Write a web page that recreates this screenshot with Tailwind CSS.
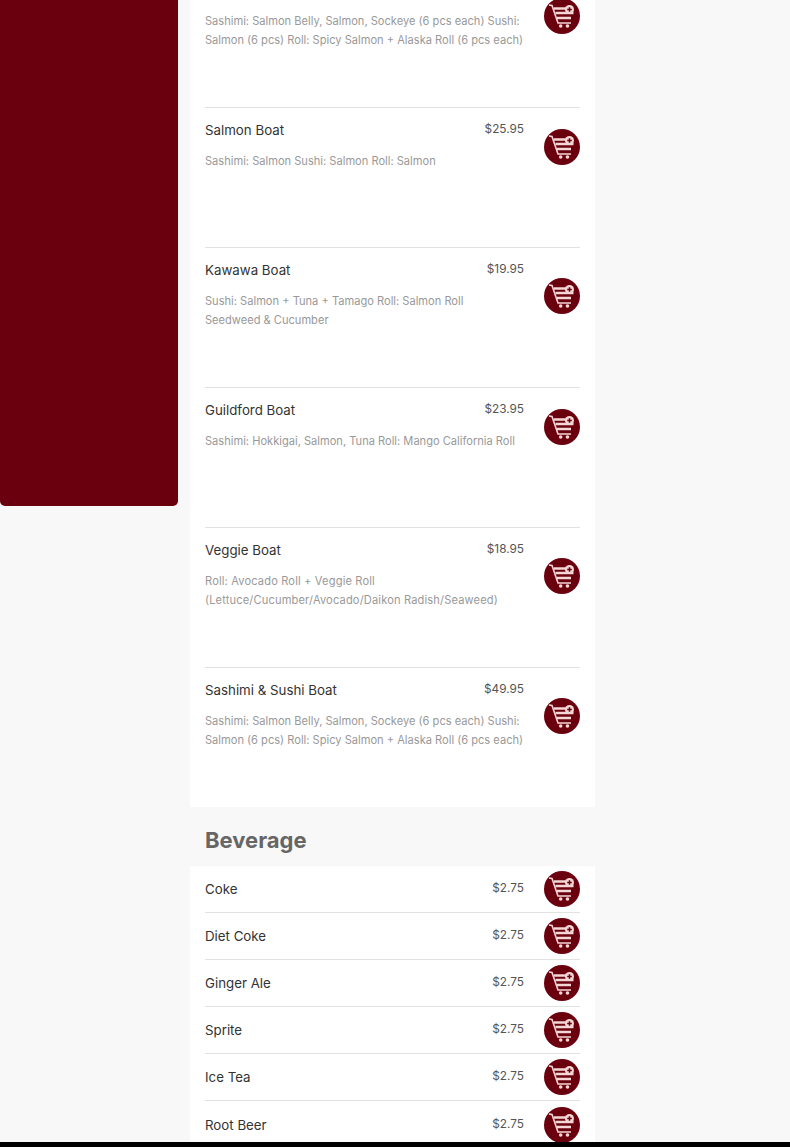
<!DOCTYPE html>
<html lang="en">

<head>
    <meta charset="UTF-8">
    <meta name="viewport" content="width=device-width, initial-scale=1.0">
    <title>Menu</title>
    <script src="https://cdn.jsdelivr.net/npm/@tailwindcss/browser@4"></script>
</head>

<body class="bg-[#f8f8f8] font-['Inter',sans-serif]">
    <div class="relative h-[1147px] overflow-hidden flex items-start">
        <div class="w-[178px] h-[506px] bg-[#6a000d] rounded-b-[5px] shrink-0"></div>

        <div class="ml-[12px] w-[405px] mt-[-33px]">
            <div class="bg-white px-[15px]">
                <div class="h-[140px] pt-[13px] flex items-start">
                    <div class="flex items-center gap-[20px] w-full">
                        <div class="w-[319px] pb-[2px]">
                            <div class="flex justify-between h-[21px] items-center text-[13.3px] text-[#333]"><span>Sashimi &amp; Sushi Boat</span><span class="pb-[2px] text-[11.8px] text-[#555]">$49.95</span></div>
                            <p class="mt-[11px] text-[11.1px] leading-[19px] text-[#999]">Sashimi: Salmon Belly, Salmon, Sockeye (6 pcs each) Sushi: Salmon (6 pcs) Roll: Spicy Salmon + Alaska Roll (6 pcs each)</p>
                        </div>
                        <button class="w-[36px] h-[36px] shrink-0"><svg viewBox="0 0 36 36" class="w-[36px] h-[36px]"><circle cx="18" cy="18" r="18" fill="#6a000d"/><path d="M5 7l3 .5 6 17.500h13" fill="none" stroke="#f3d6d6" stroke-width="1.600"/><path d="M10 10.500h12M11.500 15h18M13 20h14" fill="none" stroke="#f3d6d6" stroke-width="2.400"/><circle cx="16.700" cy="28" r="1.800" fill="#f3d6d6"/><circle cx="23.500" cy="28" r="1.800" fill="#f3d6d6"/><circle cx="25.500" cy="11.500" r="4.500" fill="#f3d6d6"/><path d="M25.500 9.200v4.600M23.200 11.500h4.600" stroke="#6a000d" stroke-width="1.500"/></svg></button>
                    </div>
                </div>
                <div class="h-[140px] pt-[12px] flex items-start border-t border-[#e2e2e2]">
                    <div class="flex items-center gap-[20px] w-full">
                        <div class="w-[319px] pb-[2px]">
                            <div class="flex justify-between h-[21px] items-center text-[13.3px] text-[#333]"><span>Salmon Boat</span><span class="pb-[2px] text-[11.8px] text-[#555]">$25.95</span></div>
                            <p class="mt-[11px] text-[11.1px] leading-[19px] text-[#999]">Sashimi: Salmon Sushi: Salmon Roll: Salmon</p>
                        </div>
                        <button class="w-[36px] h-[36px] shrink-0"><svg viewBox="0 0 36 36" class="w-[36px] h-[36px]"><circle cx="18" cy="18" r="18" fill="#6a000d"/><path d="M5 7l3 .5 6 17.500h13" fill="none" stroke="#f3d6d6" stroke-width="1.600"/><path d="M10 10.500h12M11.500 15h18M13 20h14" fill="none" stroke="#f3d6d6" stroke-width="2.400"/><circle cx="16.700" cy="28" r="1.800" fill="#f3d6d6"/><circle cx="23.500" cy="28" r="1.800" fill="#f3d6d6"/><circle cx="25.500" cy="11.500" r="4.500" fill="#f3d6d6"/><path d="M25.500 9.200v4.600M23.200 11.500h4.600" stroke="#6a000d" stroke-width="1.500"/></svg></button>
                    </div>
                </div>
                <div class="h-[140px] pt-[12px] flex items-start border-t border-[#e2e2e2]">
                    <div class="flex items-center gap-[20px] w-full">
                        <div class="w-[319px] pb-[2px]">
                            <div class="flex justify-between h-[21px] items-center text-[13.3px] text-[#333]"><span>Kawawa Boat</span><span class="pb-[2px] text-[11.8px] text-[#555]">$19.95</span></div>
                            <p class="mt-[11px] text-[11.1px] leading-[19px] text-[#999]">Sushi: Salmon + Tuna + Tamago Roll: Salmon Roll<br>Seedweed &amp; Cucumber</p>
                        </div>
                        <button class="w-[36px] h-[36px] shrink-0"><svg viewBox="0 0 36 36" class="w-[36px] h-[36px]"><circle cx="18" cy="18" r="18" fill="#6a000d"/><path d="M5 7l3 .5 6 17.500h13" fill="none" stroke="#f3d6d6" stroke-width="1.600"/><path d="M10 10.500h12M11.500 15h18M13 20h14" fill="none" stroke="#f3d6d6" stroke-width="2.400"/><circle cx="16.700" cy="28" r="1.800" fill="#f3d6d6"/><circle cx="23.500" cy="28" r="1.800" fill="#f3d6d6"/><circle cx="25.500" cy="11.500" r="4.500" fill="#f3d6d6"/><path d="M25.500 9.200v4.600M23.200 11.500h4.600" stroke="#6a000d" stroke-width="1.500"/></svg></button>
                    </div>
                </div>
                <div class="h-[140px] pt-[12px] flex items-start border-t border-[#e2e2e2]">
                    <div class="flex items-center gap-[20px] w-full">
                        <div class="w-[319px] pb-[2px]">
                            <div class="flex justify-between h-[21px] items-center text-[13.3px] text-[#333]"><span>Guildford Boat</span><span class="pb-[2px] text-[11.8px] text-[#555]">$23.95</span></div>
                            <p class="mt-[11px] text-[11.1px] leading-[19px] text-[#999]">Sashimi: Hokkigai, Salmon, Tuna Roll: Mango California Roll</p>
                        </div>
                        <button class="w-[36px] h-[36px] shrink-0"><svg viewBox="0 0 36 36" class="w-[36px] h-[36px]"><circle cx="18" cy="18" r="18" fill="#6a000d"/><path d="M5 7l3 .5 6 17.500h13" fill="none" stroke="#f3d6d6" stroke-width="1.600"/><path d="M10 10.500h12M11.500 15h18M13 20h14" fill="none" stroke="#f3d6d6" stroke-width="2.400"/><circle cx="16.700" cy="28" r="1.800" fill="#f3d6d6"/><circle cx="23.500" cy="28" r="1.800" fill="#f3d6d6"/><circle cx="25.500" cy="11.500" r="4.500" fill="#f3d6d6"/><path d="M25.500 9.200v4.600M23.200 11.500h4.600" stroke="#6a000d" stroke-width="1.500"/></svg></button>
                    </div>
                </div>
                <div class="h-[140px] pt-[12px] flex items-start border-t border-[#e2e2e2]">
                    <div class="flex items-center gap-[20px] w-full">
                        <div class="w-[319px] pb-[2px]">
                            <div class="flex justify-between h-[21px] items-center text-[13.3px] text-[#333]"><span>Veggie Boat</span><span class="pb-[2px] text-[11.8px] text-[#555]">$18.95</span></div>
                            <p class="mt-[11px] text-[11.1px] tracking-[0.15px] leading-[19px] text-[#999]">Roll: Avocado Roll + Veggie Roll (Lettuce/Cucumber/Avocado/Daikon Radish/Seaweed)</p>
                        </div>
                        <button class="w-[36px] h-[36px] shrink-0"><svg viewBox="0 0 36 36" class="w-[36px] h-[36px]"><circle cx="18" cy="18" r="18" fill="#6a000d"/><path d="M5 7l3 .5 6 17.500h13" fill="none" stroke="#f3d6d6" stroke-width="1.600"/><path d="M10 10.500h12M11.500 15h18M13 20h14" fill="none" stroke="#f3d6d6" stroke-width="2.400"/><circle cx="16.700" cy="28" r="1.800" fill="#f3d6d6"/><circle cx="23.500" cy="28" r="1.800" fill="#f3d6d6"/><circle cx="25.500" cy="11.500" r="4.500" fill="#f3d6d6"/><path d="M25.500 9.200v4.600M23.200 11.500h4.600" stroke="#6a000d" stroke-width="1.500"/></svg></button>
                    </div>
                </div>
                <div class="h-[140px] pt-[12px] flex items-start border-t border-[#e2e2e2]">
                    <div class="flex items-center gap-[20px] w-full">
                        <div class="w-[319px] pb-[2px]">
                            <div class="flex justify-between h-[21px] items-center text-[13.3px] text-[#333]"><span>Sashimi &amp; Sushi Boat</span><span class="pb-[2px] text-[11.8px] text-[#555]">$49.95</span></div>
                            <p class="mt-[11px] text-[11.1px] leading-[19px] text-[#999]">Sashimi: Salmon Belly, Salmon, Sockeye (6 pcs each) Sushi: Salmon (6 pcs) Roll: Spicy Salmon + Alaska Roll (6 pcs each)</p>
                        </div>
                        <button class="w-[36px] h-[36px] shrink-0"><svg viewBox="0 0 36 36" class="w-[36px] h-[36px]"><circle cx="18" cy="18" r="18" fill="#6a000d"/><path d="M5 7l3 .5 6 17.500h13" fill="none" stroke="#f3d6d6" stroke-width="1.600"/><path d="M10 10.500h12M11.500 15h18M13 20h14" fill="none" stroke="#f3d6d6" stroke-width="2.400"/><circle cx="16.700" cy="28" r="1.800" fill="#f3d6d6"/><circle cx="23.500" cy="28" r="1.800" fill="#f3d6d6"/><circle cx="25.500" cy="11.500" r="4.500" fill="#f3d6d6"/><path d="M25.500 9.200v4.600M23.200 11.500h4.600" stroke="#6a000d" stroke-width="1.500"/></svg></button>
                    </div>
                </div>
            </div>

            <h2 class="h-[59px] px-[15px] pt-[7px] flex items-center text-[22px] font-bold text-[#666]">Beverage</h2>

            <div class="bg-white px-[15px]">
                <div class="h-[47px] flex items-center gap-[20px] border-b border-[#e2e2e2]"><div class="w-[319px] flex justify-between items-center text-[13.3px] text-[#333]"><span class="pt-[2px]">Coke</span><span class="text-[11.8px] text-[#555]">$2.75</span></div><button class="w-[36px] h-[36px] shrink-0"><svg viewBox="0 0 36 36" class="w-[36px] h-[36px]"><circle cx="18" cy="18" r="18" fill="#6a000d"/><path d="M5 7l3 .5 6 17.500h13" fill="none" stroke="#f3d6d6" stroke-width="1.600"/><path d="M10 10.500h12M11.500 15h18M13 20h14" fill="none" stroke="#f3d6d6" stroke-width="2.400"/><circle cx="16.700" cy="28" r="1.800" fill="#f3d6d6"/><circle cx="23.500" cy="28" r="1.800" fill="#f3d6d6"/><circle cx="25.500" cy="11.500" r="4.500" fill="#f3d6d6"/><path d="M25.500 9.200v4.600M23.200 11.500h4.600" stroke="#6a000d" stroke-width="1.500"/></svg></button></div>
                <div class="h-[47px] flex items-center gap-[20px] border-b border-[#e2e2e2]"><div class="w-[319px] flex justify-between items-center text-[13.3px] text-[#333]"><span class="pt-[2px]">Diet Coke</span><span class="text-[11.8px] text-[#555]">$2.75</span></div><button class="w-[36px] h-[36px] shrink-0"><svg viewBox="0 0 36 36" class="w-[36px] h-[36px]"><circle cx="18" cy="18" r="18" fill="#6a000d"/><path d="M5 7l3 .5 6 17.500h13" fill="none" stroke="#f3d6d6" stroke-width="1.600"/><path d="M10 10.500h12M11.500 15h18M13 20h14" fill="none" stroke="#f3d6d6" stroke-width="2.400"/><circle cx="16.700" cy="28" r="1.800" fill="#f3d6d6"/><circle cx="23.500" cy="28" r="1.800" fill="#f3d6d6"/><circle cx="25.500" cy="11.500" r="4.500" fill="#f3d6d6"/><path d="M25.500 9.200v4.600M23.200 11.500h4.600" stroke="#6a000d" stroke-width="1.500"/></svg></button></div>
                <div class="h-[47px] flex items-center gap-[20px] border-b border-[#e2e2e2]"><div class="w-[319px] flex justify-between items-center text-[13.3px] text-[#333]"><span class="pt-[2px]">Ginger Ale</span><span class="text-[11.8px] text-[#555]">$2.75</span></div><button class="w-[36px] h-[36px] shrink-0"><svg viewBox="0 0 36 36" class="w-[36px] h-[36px]"><circle cx="18" cy="18" r="18" fill="#6a000d"/><path d="M5 7l3 .5 6 17.500h13" fill="none" stroke="#f3d6d6" stroke-width="1.600"/><path d="M10 10.500h12M11.500 15h18M13 20h14" fill="none" stroke="#f3d6d6" stroke-width="2.400"/><circle cx="16.700" cy="28" r="1.800" fill="#f3d6d6"/><circle cx="23.500" cy="28" r="1.800" fill="#f3d6d6"/><circle cx="25.500" cy="11.500" r="4.500" fill="#f3d6d6"/><path d="M25.500 9.200v4.600M23.200 11.500h4.600" stroke="#6a000d" stroke-width="1.500"/></svg></button></div>
                <div class="h-[47px] flex items-center gap-[20px] border-b border-[#e2e2e2]"><div class="w-[319px] flex justify-between items-center text-[13.3px] text-[#333]"><span class="pt-[2px]">Sprite</span><span class="text-[11.8px] text-[#555]">$2.75</span></div><button class="w-[36px] h-[36px] shrink-0"><svg viewBox="0 0 36 36" class="w-[36px] h-[36px]"><circle cx="18" cy="18" r="18" fill="#6a000d"/><path d="M5 7l3 .5 6 17.500h13" fill="none" stroke="#f3d6d6" stroke-width="1.600"/><path d="M10 10.500h12M11.500 15h18M13 20h14" fill="none" stroke="#f3d6d6" stroke-width="2.400"/><circle cx="16.700" cy="28" r="1.800" fill="#f3d6d6"/><circle cx="23.500" cy="28" r="1.800" fill="#f3d6d6"/><circle cx="25.500" cy="11.500" r="4.500" fill="#f3d6d6"/><path d="M25.500 9.200v4.600M23.200 11.500h4.600" stroke="#6a000d" stroke-width="1.500"/></svg></button></div>
                <div class="h-[47px] flex items-center gap-[20px] border-b border-[#e2e2e2]"><div class="w-[319px] flex justify-between items-center text-[13.3px] text-[#333]"><span class="pt-[2px]">Ice Tea</span><span class="text-[11.8px] text-[#555]">$2.75</span></div><button class="w-[36px] h-[36px] shrink-0"><svg viewBox="0 0 36 36" class="w-[36px] h-[36px]"><circle cx="18" cy="18" r="18" fill="#6a000d"/><path d="M5 7l3 .5 6 17.500h13" fill="none" stroke="#f3d6d6" stroke-width="1.600"/><path d="M10 10.500h12M11.500 15h18M13 20h14" fill="none" stroke="#f3d6d6" stroke-width="2.400"/><circle cx="16.700" cy="28" r="1.800" fill="#f3d6d6"/><circle cx="23.500" cy="28" r="1.800" fill="#f3d6d6"/><circle cx="25.500" cy="11.500" r="4.500" fill="#f3d6d6"/><path d="M25.500 9.200v4.600M23.200 11.500h4.600" stroke="#6a000d" stroke-width="1.500"/></svg></button></div>
                <div class="h-[47px] flex items-center gap-[20px]"><div class="w-[319px] flex justify-between items-center text-[13.3px] text-[#333]"><span class="pt-[2px]">Root Beer</span><span class="text-[11.8px] text-[#555]">$2.75</span></div><button class="w-[36px] h-[36px] shrink-0"><svg viewBox="0 0 36 36" class="w-[36px] h-[36px]"><circle cx="18" cy="18" r="18" fill="#6a000d"/><path d="M5 7l3 .5 6 17.500h13" fill="none" stroke="#f3d6d6" stroke-width="1.600"/><path d="M10 10.500h12M11.500 15h18M13 20h14" fill="none" stroke="#f3d6d6" stroke-width="2.400"/><circle cx="16.700" cy="28" r="1.800" fill="#f3d6d6"/><circle cx="23.500" cy="28" r="1.800" fill="#f3d6d6"/><circle cx="25.500" cy="11.500" r="4.500" fill="#f3d6d6"/><path d="M25.500 9.200v4.600M23.200 11.500h4.600" stroke="#6a000d" stroke-width="1.500"/></svg></button></div>
            </div>
        </div>

        <div class="absolute left-0 right-0 bottom-0 h-[5px] bg-black"></div>
    </div>
</body>

</html>
